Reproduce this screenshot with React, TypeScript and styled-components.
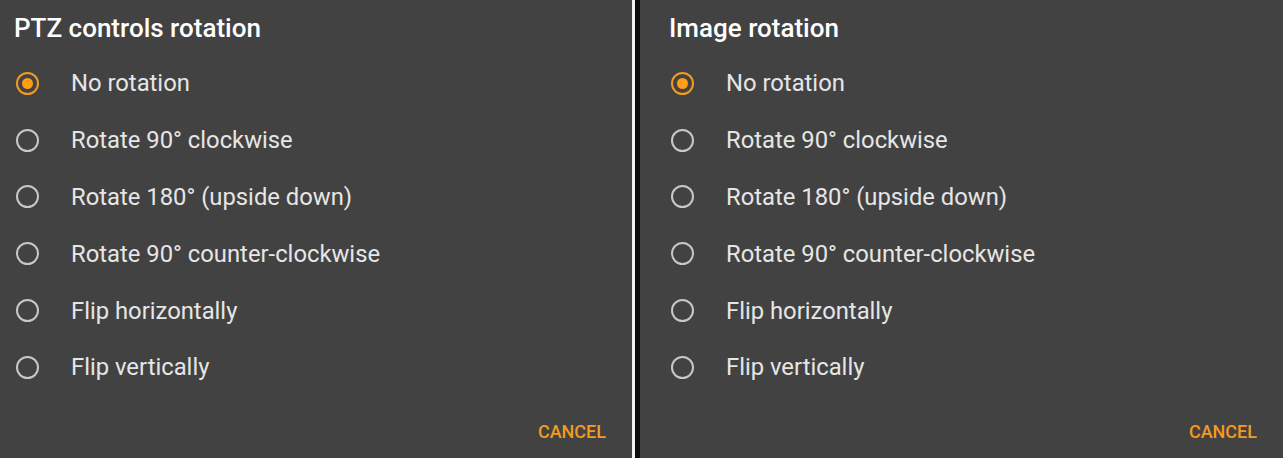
import React, { FC, useState } from "react";
import styled, { createGlobalStyle } from "styled-components";

const GlobalStyle = createGlobalStyle`
  html, body {
    margin: 0;
    padding: 0;
    background: #000;
  }
  body {
    font-family: Roboto, "Noto Sans", "Liberation Sans", sans-serif;
  }
`;

const Screen = styled.div`
  display: flex;
  width: 1283px;
  height: 458px;
  overflow: hidden;
`;

const Divider = styled.div`
  display: flex;
  width: 8px;
  height: 100%;
  background: #0c0c0c;
  &::before {
    content: "";
    width: 3px;
    background: #f2f2f2;
  }
`;

const Dialog = styled.div<{ $width: number; $inset: number }>`
  display: flex;
  flex-direction: column;
  width: ${(p) => p.$width}px;
  height: 100%;
  box-sizing: border-box;
  background: #424242;
  padding: 12px 26px 0 ${(p) => p.$inset}px;
`;

const Title = styled.h2`
  margin: 0 0 11px;
  font-size: 26px;
  line-height: 32px;
  font-weight: 500;
  color: #fff;
`;

const OptionList = styled.div`
  display: grid;
  grid-auto-rows: 56.8px;
`;

const Option = styled.label`
  display: flex;
  align-items: center;
  gap: 32px;
  padding-left: 2px;
  cursor: pointer;
  font-size: 23.8px;
  color: #e6e6e6;
`;

const Radio = styled.span<{ $on: boolean }>`
  display: flex;
  align-items: center;
  justify-content: center;
  width: 23px;
  height: 23px;
  box-sizing: border-box;
  border-radius: 50%;
  border: 2px solid ${(p) => (p.$on ? "#f39a1f" : "#c8c8c8")};
  flex-shrink: 0;
  &::after {
    content: "";
    display: ${(p) => (p.$on ? "block" : "none")};
    width: 11px;
    height: 11px;
    border-radius: 50%;
    background: #ff9d14;
  }
`;

const Footer = styled.div`
  display: flex;
  justify-content: flex-end;
  margin-top: auto;
  padding: 0 0 9px;
`;

const TextButton = styled.button`
  border: none;
  background: none;
  padding: 0 12px;
  margin-right: -12px;
  height: 36px;
  font-family: inherit;
  font-size: 18px;
  font-weight: 500;
  color: #f39a1f;
  cursor: pointer;
`;

const options = [
  "No rotation",
  "Rotate 90° clockwise",
  "Rotate 180° (upside down)",
  "Rotate 90° counter-clockwise",
  "Flip horizontally",
  "Flip vertically",
];

const RotationDialog: FC<{ title: string; width: number; inset: number }> = ({
  title,
  width,
  inset,
}) => {
  const [value, setValue] = useState(0);
  return (
    <Dialog $width={width} $inset={inset}>
      <Title>{title}</Title>
      <OptionList>
        {options.map((o, i) => (
          <Option key={o} onClick={() => setValue(i)}>
            <Radio $on={value === i} />
            {o}
          </Option>
        ))}
      </OptionList>
      <Footer>
        <TextButton>CANCEL</TextButton>
      </Footer>
    </Dialog>
  );
};

export default function App() {
  return (
    <>
      <GlobalStyle />
      <Screen>
        <RotationDialog title="PTZ controls rotation" width={632} inset={14} />
        <Divider />
        <RotationDialog title="Image rotation" width={643} inset={29} />
      </Screen>
    </>
  );
}
